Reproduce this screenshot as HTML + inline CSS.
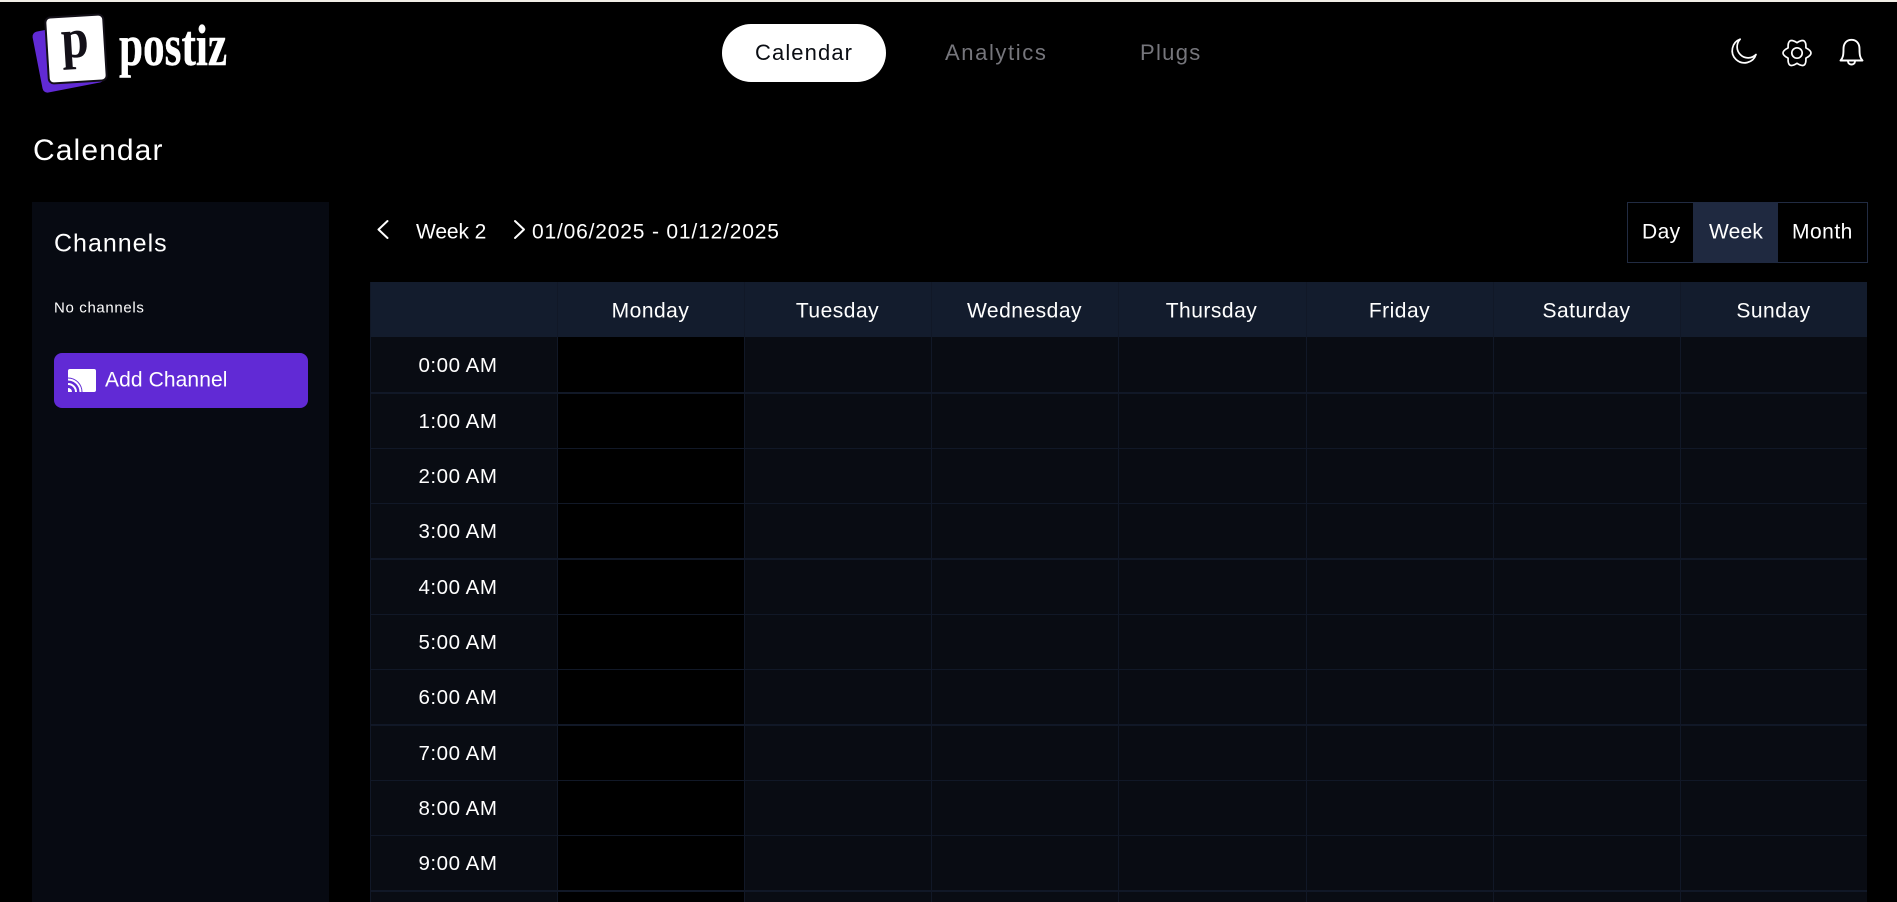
<!DOCTYPE html>
<html lang="en"><head><meta charset="utf-8"><title>Postiz Calendar</title>
<style>
html,body{margin:0;padding:0;background:#000;width:1897px;height:902px;overflow:hidden}
body{position:relative;font-family:"Liberation Sans",sans-serif;color:#fff}
.a{position:absolute}
.t{position:absolute;white-space:nowrap;transform:translateY(-50%);line-height:1}
.h{position:absolute;top:311px;width:187px;text-align:center;font-size:21px;letter-spacing:.5px;line-height:1;transform:translateY(-50%);white-space:nowrap}
.tm{position:absolute;left:358px;width:200px;text-align:center;font-size:20.5px;letter-spacing:.55px;line-height:1;transform:translateY(-50%);white-space:nowrap}
.lh{position:absolute;left:370px;width:1497px;background:#111827}
.lv{position:absolute;top:282px;bottom:0;width:1px;background:#111827}
</style></head><body>
<div class="a" style="left:0;top:0;width:1897px;height:2px;background:#f1eee6"></div>

<!-- logo -->
<div class="a" style="left:37px;top:26px;width:63px;height:62px;background:#612ad5;border-radius:5px;transform:rotate(-11deg)"></div>
<div class="a" style="left:46px;top:15px;width:56px;height:64px;background:#fff;border:2px solid #131018;border-radius:6px;transform:rotate(-3.5deg);overflow:hidden"></div>
<div class="t" style="left:61px;top:40px;font:700 56px/1 'Liberation Serif',serif;color:#131018;transform-origin:0 50%;transform:translateY(-50%) rotate(-3.5deg) scaleX(.88)">p</div>
<div class="t" style="left:119px;top:46px;font:700 58px/1 'Liberation Serif',serif;-webkit-text-stroke:.4px #fff;transform-origin:0 50%;transform:translateY(-50%) scaleX(.745)">postiz</div>

<!-- nav -->
<div class="a" style="left:722px;top:24px;width:164px;height:58px;background:#fff;border-radius:29px"></div>
<div class="t" style="left:755px;top:53px;font-size:22px;letter-spacing:1.1px;color:#0a0d13">Calendar</div>
<div class="t" style="left:945px;top:53px;font-size:22px;letter-spacing:1.6px;color:#76767c">Analytics</div>
<div class="t" style="left:1140px;top:53px;font-size:22px;letter-spacing:1.3px;color:#76767c">Plugs</div>

<!-- top right icons -->
<svg class="a" style="left:0;top:0" width="1897" height="902" fill="none" stroke="#fff" stroke-width="1.7" stroke-linecap="round" stroke-linejoin="round">
<path d="M1756 54.5A12.2 12.2 0 1 1 1740.2 39.2 9.6 9.6 0 0 0 1756 54.5z"/>
<path transform="translate(1797 53)" d="M8.9 -5.15Q19.1 0 8.9 5.15Q9.55 16.5 0 10.3Q-9.55 16.5 -8.9 5.15Q-19.1 0 -8.9 -5.15Q-9.55 -16.5 0 -10.3Q9.55 -16.5 8.9 -5.15Z"/>
<circle cx="1797" cy="53" r="5.2"/>
<path stroke-width="1.9" d="M1840.5 60.5C1843 58 1843.5 55 1843.5 49C1843.5 43 1847 39.8 1851.5 39.8C1856 39.8 1859.5 43 1859.5 49C1859.5 55 1860 58 1862.5 60.5Z"/>
<path stroke-width="1.9" d="M1848 61.5C1848.5 65.5 1854.5 65.5 1855 61.5"/>
</svg>

<!-- title -->
<div class="t" style="left:33px;top:151px;font-size:30px;letter-spacing:1.1px">Calendar</div>

<!-- sidebar -->
<div class="a" style="left:32px;top:202px;width:297px;height:700px;background:#070a12"></div>
<div class="t" style="left:54px;top:244px;font-size:25px;letter-spacing:1px">Channels</div>
<div class="t" style="left:54px;top:308px;font-size:15px;letter-spacing:.65px">No channels</div>
<div class="a" style="left:54px;top:353px;width:254px;height:55px;background:#612ad5;border-radius:8px"></div>
<svg class="a" style="left:68px;top:369px" width="28" height="23">
<rect width="28" height="23" rx="2" fill="#fff"/>
<path d="M0 8.5A14.5 14.5 0 0 1 14.5 23H0Z" fill="#612ad5"/>
<g fill="none" stroke="#fff" stroke-width="2"><path d="M0 10.5A12.5 12.5 0 0 1 12.5 23"/><path d="M0 15A8 8 0 0 1 8 23"/></g>
<path d="M0 19A4 4 0 0 1 4 23H0Z" fill="#fff"/>
</svg>
<div class="t" style="left:105px;top:380px;font-size:21px;letter-spacing:.1px">Add Channel</div>

<!-- week switcher -->
<svg class="a" style="left:0;top:0" width="1897" height="902" fill="none" stroke="#fff" stroke-width="2" stroke-linecap="round" stroke-linejoin="round">
<path d="M387.5 221L378.5 229.5L387.5 238"/>
<path d="M515 221L524 229.5L515 238"/>
</svg>
<div class="t" style="left:416px;top:232px;font-size:21px;letter-spacing:-.1px">Week 2</div>
<div class="t" style="left:532px;top:232px;font-size:21px;letter-spacing:.82px">01/06/2025 - 01/12/2025</div>

<div class="a" style="left:1627px;top:202px;width:239px;height:59px;border:1px solid #212b42"></div>
<div class="a" style="left:1693px;top:202px;width:85px;height:61px;background:#1f2940"></div>
<div class="t" style="left:1642px;top:232px;font-size:21px;letter-spacing:.4px">Day</div>
<div class="t" style="left:1709px;top:232px;font-size:21px;letter-spacing:.2px">Week</div>
<div class="t" style="left:1792px;top:232px;font-size:21px;letter-spacing:.5px">Month</div>

<!-- grid -->
<div class="a" style="left:370px;top:282px;width:1497px;height:620px;background:#090c13"></div>
<div class="a" style="left:558px;top:337px;width:186px;height:565px;background:#000"></div>
<div class="a" style="left:370px;top:282px;width:1497px;height:55px;background:#131c2d"></div>

<div class="lv" style="left:370px"></div>
<div class="lv" style="left:557px"></div>
<div class="lv" style="left:744px"></div>
<div class="lv" style="left:931px"></div>
<div class="lv" style="left:1118px"></div>
<div class="lv" style="left:1306px"></div>
<div class="lv" style="left:1493px"></div>
<div class="lv" style="left:1680px"></div>

<div class="lh" style="top:392px;height:2px"></div>
<div class="lh" style="top:448px;height:1px"></div>
<div class="lh" style="top:503px;height:1px"></div>
<div class="lh" style="top:558px;height:2px"></div>
<div class="lh" style="top:614px;height:1px"></div>
<div class="lh" style="top:669px;height:1px"></div>
<div class="lh" style="top:724px;height:2px"></div>
<div class="lh" style="top:780px;height:1px"></div>
<div class="lh" style="top:835px;height:1px"></div>
<div class="lh" style="top:890px;height:2px"></div>

<div class="h" style="left:557px">Monday</div>
<div class="h" style="left:744px">Tuesday</div>
<div class="h" style="left:931px">Wednesday</div>
<div class="h" style="left:1118px">Thursday</div>
<div class="h" style="left:1306px">Friday</div>
<div class="h" style="left:1493px">Saturday</div>
<div class="h" style="left:1680px">Sunday</div>

<div class="tm" style="top:366px">0:00 AM</div>
<div class="tm" style="top:422px">1:00 AM</div>
<div class="tm" style="top:477px">2:00 AM</div>
<div class="tm" style="top:532px">3:00 AM</div>
<div class="tm" style="top:588px">4:00 AM</div>
<div class="tm" style="top:643px">5:00 AM</div>
<div class="tm" style="top:698px">6:00 AM</div>
<div class="tm" style="top:754px">7:00 AM</div>
<div class="tm" style="top:809px">8:00 AM</div>
<div class="tm" style="top:864px">9:00 AM</div>
</body></html>
